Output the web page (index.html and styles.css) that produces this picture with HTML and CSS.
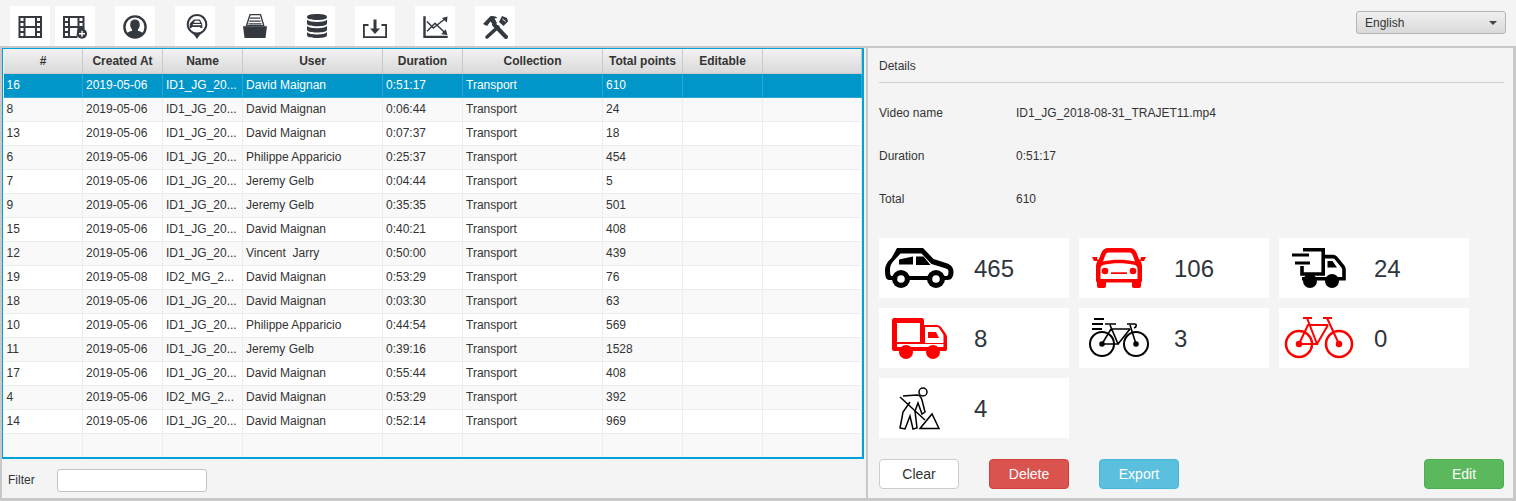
FILE: index.html
```html
<!DOCTYPE html>
<html lang="en">
<head>
  <meta charset="UTF-8" />
  <title>Video Collections</title>
  <link rel="stylesheet" href="styles.css">
</head>
<body>
  <header class="toolbar">
    <div class="tool-group">
      <button class="tool"><svg viewBox="-.5 0 40 40"><path fill-rule="evenodd" d="M8 10h23.500v22H8zM10 12v3h3v-3zM10 17v3h3v-3zM10 22v3h3v-3zM10 27v3h3v-3zM26.500 12v3h3v-3zM26.500 17v3h3v-3zM26.500 22v3h3v-3zM26.500 27v3h3v-3zM15 12v8h9.500v-8zM15 22v8h9.500v-8z"/></svg></button>
      <button class="tool"><svg viewBox="0 0 40 40"><path fill-rule="evenodd" d="M8 10h21.500v14a7 7 0 0 0-7 8H8zM10 12v3h3v-3zM10 17v3h3v-3zM10 22v3h3v-3zM10 27v3h3v-3zM24.500 12v3h3v-3zM24.500 17v3h3v-3zM15 12v8h7.500v-8zM15 22v8h6.500l1-8z"/><circle cx="27" cy="27.800" r="5"/><path d="M26.300 24.800h1.400v2.300H30v1.400h-2.300v2.300h-1.400v-2.300H24v-1.400h2.300z" fill="#fff"/></svg></button>
      <button class="tool tool-gap"><svg viewBox="0 0 40 40"><circle cx="20" cy="21" r="10.600" fill="none" stroke-width="2.400" stroke="#33393f"/><path d="M20 13.500c3.200 0 4.800 2.400 4.800 5.300 0 2.100-.8 3.700-1.900 4.700v1.300c2.500.8 4.600 1.700 5.400 2.900a10.300 10.300 0 0 1-16.600 0c.8-1.200 2.900-2.100 5.400-2.900v-1.300c-1.100-1-1.900-2.600-1.900-4.700 0-2.900 1.600-5.300 4.800-5.300z"/></svg></button>
      <button class="tool tool-gap"><svg viewBox="0 0 40 40"><path fill-rule="evenodd" d="M22 8a10.300 10.300 0 0 1 5.200 19.200c-2 1.200-3.700 3-5.200 5.800-1.500-2.800-3.200-4.600-5.200-5.800A10.300 10.300 0 0 1 22 8zM22 10a8.300 8.300 0 1 0 0 16.600A8.300 8.300 0 0 0 22 10z"/><path d="M19 13.500h6l1.500 3.200.8 1V22h-2v-1h-8.600v1h-2v-4.300l.8-1zM19.800 14.800l-.9 1.900h6.200l-.9-1.900zM17.800 18v1.300h8.400V18z" fill-rule="evenodd"/></svg></button>
      <button class="tool tool-gap"><svg viewBox="0 0 40 40"><path d="M8 20.300h24l-1.500 11.700h-21z"/><path fill="#fff" stroke="#33393f" stroke-width="1.300" d="M15 8.700h10.500l3.300 11H11.500z"/><path d="M15 11.500h10v1.200H15zM14.300 14.500h11.400v1.200H14.300zM13.500 17.300h13v1.200h-13z"/></svg></button>
      <button class="tool tool-gap"><svg viewBox="0 0 40 40"><path d="M12 11c0-2.200 4.500-3 10-3s10 .8 10 3-4.500 3-10 3-10-.8-10-3zM12 13.700c1.500 1.600 5.500 2.200 10 2.200s8.500-.6 10-2.200v3.600c0 2.200-4.500 3-10 3s-10-.8-10-3zM12 20c1.500 1.600 5.500 2.200 10 2.200s8.500-.6 10-2.200v3.600c0 2.200-4.500 3-10 3s-10-.8-10-3zM12 26.300c1.500 1.600 5.500 2.200 10 2.200s8.500-.6 10-2.200V29c0 2.200-4.500 3-10 3s-10-.8-10-3z"/></svg></button>
      <button class="tool tool-gap"><svg viewBox="0 0 40 40"><path d="M13.500 19H8.900v12.100h22.200V19h-4.600" fill="none" stroke="#33393f" stroke-width="1.800"/><path d="M18.500 13.500h3v9h3.500L20 28l-5-5.500h3.500z"/></svg></button>
      <button class="tool tool-gap"><svg viewBox="0 0 40 40"><path d="M8.300 10.300h2.400v19.400h22V32H8.300z"/><path d="M12 15.500l6.300 6.500 11.500-9M12 25.300l8-8 10 9.500" fill="none" stroke="#33393f" stroke-width="1.500"/><path d="M32.500 10.500l-.6 6-5-4.500zM32.500 29l-6.300-.8 4.500-5z"/></svg></button>
      <button class="tool tool-gap"><svg viewBox="0 0 40 40"><path d="M8 18l7-7.500c3-1 6 0 7.500 1.500l-3 .5 2.500 4.500-3 3-3.500-4.500-3.500 4.500z"/><path d="M19 18.500L31 31" stroke="#33393f" stroke-width="4" stroke-linecap="round"/><path d="M27 10l5 2 1 3.500-4.500 4.500-4.500-4z"/><path d="M27.500 13l3 2.500" stroke="#fff" stroke-width="1"/><path d="M23 21L12 31" stroke="#33393f" stroke-width="3.500" stroke-linecap="round"/></svg></button>
    </div>
    <div class="lang-select"><span>English</span><i class="caret"></i></div>
  </header>

  <div class="main">
    <section class="left-pane">
      <div class="table-frame">
        <table class="video-table">
          <thead>
            <tr><th>#</th><th>Created At</th><th>Name</th><th>User</th><th>Duration</th><th>Collection</th><th>Total points</th><th>Editable</th><th></th></tr>
          </thead>
          <tbody>
            <tr class="selected"><td>16</td><td>2019-05-06</td><td>ID1_JG_20...</td><td>David Maignan</td><td>0:51:17</td><td>Transport</td><td>610</td><td></td><td></td></tr>
            <tr><td>8</td><td>2019-05-06</td><td>ID1_JG_20...</td><td>David Maignan</td><td>0:06:44</td><td>Transport</td><td>24</td><td></td><td></td></tr>
            <tr><td>13</td><td>2019-05-06</td><td>ID1_JG_20...</td><td>David Maignan</td><td>0:07:37</td><td>Transport</td><td>18</td><td></td><td></td></tr>
            <tr><td>6</td><td>2019-05-06</td><td>ID1_JG_20...</td><td>Philippe Apparicio</td><td>0:25:37</td><td>Transport</td><td>454</td><td></td><td></td></tr>
            <tr><td>7</td><td>2019-05-06</td><td>ID1_JG_20...</td><td>Jeremy Gelb</td><td>0:04:44</td><td>Transport</td><td>5</td><td></td><td></td></tr>
            <tr><td>9</td><td>2019-05-06</td><td>ID1_JG_20...</td><td>Jeremy Gelb</td><td>0:35:35</td><td>Transport</td><td>501</td><td></td><td></td></tr>
            <tr><td>15</td><td>2019-05-06</td><td>ID1_JG_20...</td><td>David Maignan</td><td>0:40:21</td><td>Transport</td><td>408</td><td></td><td></td></tr>
            <tr><td>12</td><td>2019-05-06</td><td>ID1_JG_20...</td><td>Vincent&nbsp; Jarry</td><td>0:50:00</td><td>Transport</td><td>439</td><td></td><td></td></tr>
            <tr><td>19</td><td>2019-05-08</td><td>ID2_MG_2...</td><td>David Maignan</td><td>0:53:29</td><td>Transport</td><td>76</td><td></td><td></td></tr>
            <tr><td>18</td><td>2019-05-06</td><td>ID1_JG_20...</td><td>David Maignan</td><td>0:03:30</td><td>Transport</td><td>63</td><td></td><td></td></tr>
            <tr><td>10</td><td>2019-05-06</td><td>ID1_JG_20...</td><td>Philippe Apparicio</td><td>0:44:54</td><td>Transport</td><td>569</td><td></td><td></td></tr>
            <tr><td>11</td><td>2019-05-06</td><td>ID1_JG_20...</td><td>Jeremy Gelb</td><td>0:39:16</td><td>Transport</td><td>1528</td><td></td><td></td></tr>
            <tr><td>17</td><td>2019-05-06</td><td>ID1_JG_20...</td><td>David Maignan</td><td>0:55:44</td><td>Transport</td><td>408</td><td></td><td></td></tr>
            <tr><td>4</td><td>2019-05-06</td><td>ID2_MG_2...</td><td>David Maignan</td><td>0:53:29</td><td>Transport</td><td>392</td><td></td><td></td></tr>
            <tr><td>14</td><td>2019-05-06</td><td>ID1_JG_20...</td><td>David Maignan</td><td>0:52:14</td><td>Transport</td><td>969</td><td></td><td></td></tr>
            <tr><td></td><td></td><td></td><td></td><td></td><td></td><td></td><td></td><td></td></tr>
          </tbody>
        </table>
      </div>
      <div class="filter-row">
        <label class="filter-label">Filter</label>
        <input class="filter-input" type="text" />
      </div>
    </section>

    <section class="right-pane">
      <h2 class="details-title">Details</h2>
      <div class="info-row"><span class="info-label">Video name</span><span>ID1_JG_2018-08-31_TRAJET11.mp4</span></div>
      <div class="info-row"><span class="info-label">Duration</span><span>0:51:17</span></div>
      <div class="info-row"><span class="info-label">Total</span><span>610</span></div>

      <div class="stats">
        <div class="stat">
          <svg class="stat-icon" viewBox="0 0 95 60"><path d="M18 10h26l10.500 11 14 4.500c4 1.500 6 4.500 6 8.500 0 4.500-2 8-6 8H10c-3 0-4-4-4-9 0-6 3-10 6.500-13z"/><path fill="#fff" d="M11 32c0-4 1.200-6.500 3.500-9l7-7.500h21l10 10.500 14.500 4.500c2 .7 2.500 1.500 2.500 3.500 0 2-.5 4-2 4H12.500c-1 0-1.500-3-1.500-6z"/><path d="M20 21.500l14-3v8H20zM37 18.500h7.500l7 8.500H37z"/><circle cx="22" cy="41" r="9"/><circle cx="22" cy="41" r="3.800" fill="#fff"/><circle cx="57" cy="41" r="9"/><circle cx="57" cy="41" r="3.800" fill="#fff"/></svg>
          <span class="stat-value">465</span>
        </div>
        <div class="stat">
          <svg class="stat-icon red" viewBox="0 0 95 60"><path d="M13 19h5l1 4h-4zM62 19h5l-2 4h-4z"/><path d="M29 10h22c3 0 5 1.500 6.500 4.500L60 21c2 2 3 4.500 3 7.500V43c0 .6-.5 1-1 1.500V48c0 1.300-.8 2-2 2h-5c-1.200 0-2-.7-2-2v-3.500H27V48c0 1.300-.8 2-2 2h-5c-1.200 0-2-.7-2-2v-3.500c-.5-.5-1-.9-1-1.500V28.500c0-3 1-5.500 3-7.500l2.500-6.500C24 11.500 26 10 29 10z"/><path fill="#fff" d="M29.500 14.500h21c1.500 0 2.500 1 3.300 3l2.200 6c-10-2.500-22-2.500-32 0l2.200-6c.8-2 1.800-3 3.300-3zM24 27c10-2.500 22-2.500 32 0 1.500.7 2.500 2 2.500 3.500V41h-37V30.500c0-1.500 1-2.800 2.500-3.500z"/><circle cx="26" cy="33" r="3.300"/><circle cx="54" cy="33" r="3.300"/><path d="M32 34.300h16v1.700H32z"/></svg>
          <span class="stat-value">106</span>
        </div>
        <div class="stat">
          <svg class="stat-icon truck" viewBox="0 0 95 60"><path d="M24 11.800h20.200V36H23V28M44 18.600h10c1.500 0 2.500.5 3.500 2l6.500 8c.7 1 1 1.500 1 3v9.200H23"/><path d="M13 17h17M16 25h15" stroke-width="3.200"/><path class="solid" d="M48.500 23h5l4.500 6.500h-9.500z"/><circle class="solid" cx="31" cy="43" r="7"/><circle class="solid" cx="53" cy="43" r="7"/></svg>
          <span class="stat-value">24</span>
        </div>
        <div class="stat">
          <svg class="stat-icon red" viewBox="0 0 95 60"><path fill-rule="evenodd" d="M15 10h28c1 0 2 1 2 2v5h13c1.500 0 3 1 4 2l5 7c.7 1 1 2 1 3v12c0 1.500-1 2-2 2H15c-1 0-2-1-2-2V12c0-1 1-2 2-2zM18 15v19h23V15zM46 19v16h18.500v-7c0-1-.1-1.500-.5-2l-4-6c-.5-.5-1-1-2-1zM18 36v3h46.500v-3z"/><path d="M49 24h8l3 6H49z"/><circle cx="27" cy="44" r="7"/><circle cx="54" cy="44" r="7"/></svg>
          <span class="stat-value">8</span>
        </div>
        <div class="stat">
          <svg class="stat-icon line" viewBox="0 0 95 60"><circle cx="23" cy="36" r="12"/><circle cx="57" cy="36" r="12"/><path stroke-width="1.600" d="M23 36l9-15h19M31 17l8 19H23M39 36l12-15M26 16h11M48 16h8c1.500 0 2 3-1 4M51 17l6 19"/><path stroke-width="1.800" d="M15 11h10M13 16h11M13 21h10"/><circle cx="23" cy="36" r="1.800" fill="#000"/><circle cx="57" cy="36" r="1.800" fill="#000"/></svg>
          <span class="stat-value">3</span>
        </div>
        <div class="stat">
          <svg class="stat-icon line red-line" viewBox="0 0 95 60"><circle cx="20" cy="36" r="13"/><circle cx="60" cy="36" r="13"/><path stroke-width="2" d="M20 36l9-19h20M28 10l10 26H20M38 36l11-19M24 10h9M44 10h9M48 10l12 26"/><circle cx="20" cy="36" r="2" fill="#f00"/><circle cx="60" cy="36" r="2" fill="#f00"/></svg>
          <span class="stat-value">0</span>
        </div>
        <div class="stat">
          <svg class="stat-icon line worker" viewBox="0 0 95 60"><circle cx="44" cy="14" r="4"/><path d="M24 18l14-1c3 0 4 2 5 5l3 12-3 2-4-11-3 8 2 17-4 1-3-13-5 13-5-1 3-16 7-10"/><path d="M21 19l25 23"/><path d="M41 50.500h19L53 36z"/></svg>
          <span class="stat-value">4</span>
        </div>
      </div>

      <div class="actions">
        <button class="btn btn-clear">Clear</button>
        <button class="btn btn-delete">Delete</button>
        <button class="btn btn-export">Export</button>
        <button class="btn btn-edit">Edit</button>
      </div>
    </section>
  </div>
</body>
</html>
```

FILE: styles.css
```css
* {
  box-sizing: border-box;
}

body {
  margin: 0;
  height: 501px;
  overflow: hidden;
  background: #f4f4f4;
  color: #333;
  font-family: "Liberation Sans", Arial, sans-serif;
  font-size: 12px;
}

.toolbar {
  height: 46px;
  padding: 6px 10px 0 10px;
  display: flex;
  justify-content: space-between;
}

.tool-group {
  display: flex;
}

.tool {
  width: 40px;
  height: 40px;
  padding: 0;
  border: none;
  background: #fff;
  margin-right: 5px;
}

.tool-gap {
  margin-left: 15px;
}

.tool svg {
  display: block;
  width: 40px;
  height: 40px;
  fill: #33393f;
}

.lang-select {
  width: 150px;
  height: 23px;
  margin-top: 5px;
  padding: 0 8px;
  display: flex;
  align-items: center;
  justify-content: space-between;
  border: 1px solid #b5b5b5;
  border-radius: 3px;
  background: linear-gradient(#f0f0f0, #d9d9d9);
}

.caret {
  width: 0;
  height: 0;
  border-left: 4px solid transparent;
  border-right: 4px solid transparent;
  border-top: 4px solid #444;
}

.main {
  height: 455px;
  display: flex;
  border: 2px solid #c9c9c9;
  border-right-width: 3px;
  border-bottom-width: 3px;
}

.left-pane {
  width: 862px;
  flex: none;
}

.table-frame {
  height: 411px;
  width: 862px;
  border: 2px solid #00a2d8;
  border-width: 1px 2px 2px 1px;
  background: #f9f9f9;
  overflow: hidden;
}

.video-table {
  width: 859px;
  border-collapse: collapse;
  table-layout: fixed;
}

.video-table th:nth-child(1) { width: 79px; }
.video-table th:nth-child(2),
.video-table th:nth-child(3),
.video-table th:nth-child(5),
.video-table th:nth-child(7),
.video-table th:nth-child(8) { width: 80px; }
.video-table th:nth-child(4),
.video-table th:nth-child(6) { width: 140px; }

.video-table th {
  height: 24px;
  padding: 1px 0 0;
  background: linear-gradient(#f2f2f2, #d9d9d9);
  border-right: 1px solid #c9c9c9;
  border-left: 1px solid #f4f4f4;
  border-bottom: 1px solid #c9c9c9;
  font-size: 12px;
  color: #333;
}

.video-table td {
  height: 24px;
  padding: 0 3px;
  border-right: 1px solid #ededed;
  border-bottom: 1px solid #ededed;
  background: #fff;
  white-space: nowrap;
  overflow: hidden;
}

.video-table tbody tr:nth-child(even) td {
  background: #f9f9f9;
}

.video-table tr.selected td {
  background: #0096c9;
  color: #fff;
  border-color: #2ba6d0;
}

.filter-row {
  height: 40px;
  padding: 2px 0 0 6px;
  display: flex;
  align-items: center;
}

.filter-label {
  width: 49px;
}

.filter-input {
  width: 150px;
  height: 23px;
  border: 1px solid #c4c4c4;
  border-radius: 3px;
  background: #fff;
}

.right-pane {
  flex: 1;
  margin-left: 2px;
  border-left: 2px solid #c9c9c9;
  padding: 0 9px 0 11px;
}

.details-title {
  margin: 0;
  height: 35px;
  padding-top: 11px;
  font-size: 12px;
  font-weight: normal;
  border-bottom: 1px solid #d0d0d0;
}

.info-row {
  height: 43px;
  display: flex;
  align-items: center;
}

.details-title + .info-row {
  margin-top: 8px;
}

.info-label {
  width: 137px;
}

.stats {
  margin-top: 18px;
  width: 600px;
  display: grid;
  grid-template-columns: repeat(3, 190px);
  grid-auto-rows: 60px;
  gap: 10px;
}

.stat {
  display: flex;
  align-items: center;
  background: #fff;
}

.stat-icon {
  width: 95px;
  height: 60px;
  flex: none;
  fill: #000;
}

.stat-icon.red {
  fill: #f00;
}

.stat-icon.line {
  fill: none;
  stroke: #000;
  stroke-width: 2;
}

.stat-icon.red-line {
  stroke: #f00;
  stroke-width: 2.500;
}

.stat-icon.worker {
  stroke-width: 1.500;
}

.stat-icon.truck {
  fill: none;
  stroke: #000;
  stroke-width: 3.600;
}

.stat-icon.truck .solid {
  fill: #000;
  stroke: none;
}

.stat-value {
  padding-top: 1px;
  font-size: 24px;
  color: #2f353b;
}

.actions {
  margin-top: 21px;
  display: flex;
  gap: 30px;
}

.btn {
  width: 80px;
  height: 30px;
  border: 1px solid transparent;
  border-radius: 4px;
  color: #fff;
  font-family: inherit;
  font-size: 14px;
}

.btn-clear {
  background: #fff;
  border-color: #ccc;
  color: #333;
}

.btn-delete {
  background: #d9534f;
  border-color: #d43f3a;
}

.btn-export {
  background: #5bc0de;
  border-color: #46b8da;
}

.btn-edit {
  background: #5cb85c;
  border-color: #4cae4c;
  margin-left: auto;
}
```
